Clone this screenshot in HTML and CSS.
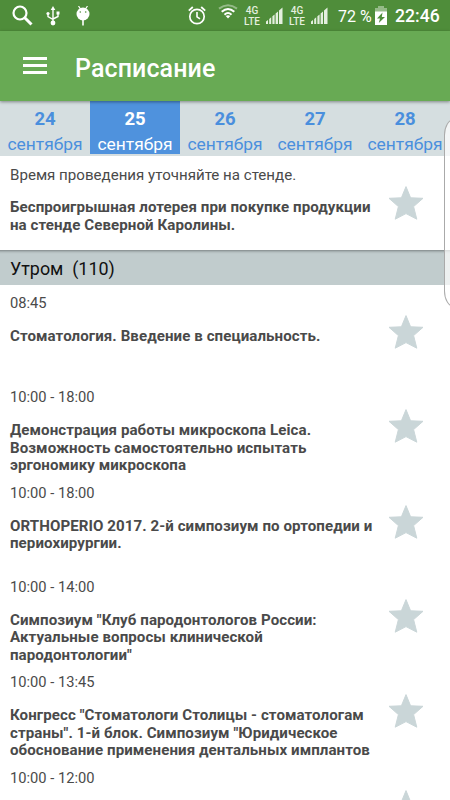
FILE: index.html
```
<!DOCTYPE html>
<html lang="ru">
<head>
    <meta charset="UTF-8">
    <meta name="viewport" content="width=device-width, initial-scale=1.0">
    <title>Расписание</title>
    <link rel="stylesheet" href="styles.css">
</head>
<body>
    <svg class="defs" width="0" height="0">
        <symbol id="star" viewBox="0 0 36 34">
            <path d="M18 .6 22.6 11.8 35 12.3 25.6 20.6 28.8 33.2 18 27.6 7.2 33.2 10.4 20.6 1 12.3 13.4 11.8Z" fill="#cad6d8" stroke="#cad6d8" stroke-linejoin="round"/>
        </symbol>
        <symbol id="signal" viewBox="0 0 18 18">
            <path d="M1 17v-2.500l2-1.500V17zM4.200 17v-5l2-1.800V17zM7.400 17V9.300l2.200-1.800V17zM10.600 17V6.500l2.400-2V17zM14 17V3.500l3.500-3V17z" fill="#e4efdf"/>
        </symbol>
    </svg>

    <div class="status-bar">
        <div class="status-left">
            <svg class="icon-search" width="22" height="22" viewBox="0 0 22 22" fill="none" stroke="#fff">
                <circle cx="8" cy="8" r="6.500" stroke-width="2.200"/>
                <path d="M12.500 12.500 19.500 19.500" stroke-width="3"/>
            </svg>
            <svg class="icon-usb" width="14" height="20" viewBox="0 0 14 20">
                <path d="M7 3v13M7 13.500 2 10.500V8M7 13 12 10.500V7" fill="none" stroke="#fff" stroke-width="1.400"/>
                <path d="M7 0 9.300 4H4.700z" fill="#fff"/>
                <circle cx="7" cy="17" r="2.400" fill="#fff"/>
                <circle cx="2" cy="7.500" r="1.600" fill="#fff"/>
                <path d="M10.500 5.500h3v3h-3z" fill="#fff"/>
            </svg>
            <svg class="icon-droid" width="14" height="20" viewBox="0 0 14 20">
                <path d="M2.500 0 4.500 3M11.500 0 9.500 3" stroke="#fff" stroke-width="1.200"/>
                <circle cx="7" cy="8" r="6.500" fill="#fff"/>
                <path d="M7 14v5.500" stroke="#fff" stroke-width="1.600"/>
                <circle cx="4.300" cy="6" r=".8" fill="#4f8d3a"/>
                <circle cx="9.700" cy="6" r=".8" fill="#4f8d3a"/>
            </svg>
        </div>
        <div class="status-right">
            <svg class="icon-alarm" width="18" height="19" viewBox="0 0 18 19" fill="none" stroke="#fff">
                <circle cx="9" cy="10.500" r="7.200" stroke-width="1.700"/>
                <path d="M9 6v4.800l3 2" stroke-width="1.600"/>
                <path d="M.8 4.700 4.800 1M17.200 4.700 13.200 1" stroke-width="1.800"/>
            </svg>
            <svg class="icon-wifi" width="20" height="15" viewBox="0 0 20 15" fill="none" stroke="#fff">
                <path d="M1 4.600Q10-2.200 19 4.600" stroke-width="2" opacity=".4"/>
                <path d="M3.700 7.800Q10 2.200 16.300 7.800" stroke-width="2"/>
                <path d="M6.500 10.700Q10 7.200 13.500 10.700" stroke-width="2"/>
                <path d="M10 14.500 7.700 12q2.300-1.600 4.600 0z" fill="#fff" stroke="none"/>
            </svg>
            <div class="net"><span>4G</span><span>LTE</span></div>
            <svg class="icon-signal" width="18" height="18"><use href="#signal"/></svg>
            <div class="net"><span>4G</span><span>LTE</span></div>
            <svg class="icon-signal" width="18" height="18"><use href="#signal"/></svg>
            <span class="percent">72 %</span>
            <svg class="icon-battery" width="12" height="19" viewBox="0 0 12 19">
                <path d="M3 0h6v2h3v4H0V2h3z" fill="#fff" opacity=".4"/>
                <path d="M0 5.500h12V19H0z" fill="#fff"/>
                <path d="M7.500 6.500 2 12.500h3L3.800 17 10 11H6.800z" fill="#4f8d3a"/>
            </svg>
            <span class="clock">22:46</span>
        </div>
    </div>

    <header class="toolbar">
        <div class="menu"><i></i><i></i><i></i></div>
        <h1>Расписание</h1>
    </header>

    <nav class="days">
        <div class="day"><b>24</b><span>сентября</span></div>
        <div class="day active"><b>25</b><span>сентября</span></div>
        <div class="day"><b>26</b><span>сентября</span></div>
        <div class="day"><b>27</b><span>сентября</span></div>
        <div class="day"><b>28</b><span>сентября</span></div>
    </nav>

    <main>
        <div class="event">
            <div class="info">
                <p class="time note">Время проведения уточняйте на стенде.</p>
                <p class="title">Беспроигрышная лотерея при покупке продукции<br>на стенде Северной Каролины.</p>
            </div>
            <svg class="star" width="36" height="34"><use href="#star"/></svg>
        </div>

        <h2 class="section">Утром&nbsp; (110)</h2>

        <div class="event">
            <div class="info">
                <p class="time">08:45</p>
                <p class="title">Стоматология. Введение в специальность.</p>
            </div>
            <svg class="star" width="36" height="34"><use href="#star"/></svg>
        </div>
        <div class="event">
            <div class="info">
                <p class="time">10:00 - 18:00</p>
                <p class="title">Демонстрация работы микроскопа Leica.<br>Возможность самостоятельно испытать<br>эргономику микроскопа</p>
            </div>
            <svg class="star" width="36" height="34"><use href="#star"/></svg>
        </div>
        <div class="event">
            <div class="info">
                <p class="time">10:00 - 18:00</p>
                <p class="title">ORTHOPERIO 2017. 2-й симпозиум по ортопедии и<br>периохирургии.</p>
            </div>
            <svg class="star" width="36" height="34"><use href="#star"/></svg>
        </div>
        <div class="event">
            <div class="info">
                <p class="time">10:00 - 14:00</p>
                <p class="title">Симпозиум "Клуб пародонтологов России:<br>Актуальные вопросы клинической<br>пародонтологии"</p>
            </div>
            <svg class="star" width="36" height="34"><use href="#star"/></svg>
        </div>
        <div class="event">
            <div class="info">
                <p class="time">10:00 - 13:45</p>
                <p class="title">Конгресс "Стоматологи Столицы - стоматологам<br>страны". 1-й блок. Симпозиум "Юридическое<br>обоснование применения дентальных имплантов</p>
            </div>
            <svg class="star" width="36" height="34"><use href="#star"/></svg>
        </div>
        <div class="event">
            <div class="info">
                <p class="time">10:00 - 12:00</p>
            </div>
            <svg class="star" width="36" height="34"><use href="#star"/></svg>
        </div>
    </main>

    <div class="edge-panel"></div>
</body>
</html>
```
FILE: styles.css
```
* {
    margin: 0;
    padding: 0;
    box-sizing: border-box;
}

html {
    overflow: hidden;
}

body {
    font-family: Roboto, sans-serif;
    background: #fff;
    color: #4a4a4a;
    width: 450px;
    height: 800px;
    overflow: hidden;
    position: relative;
    display: flex;
    flex-direction: column;
}

main {
    flex: 1;
    min-height: 0;
    overflow: hidden;
}

svg {
    display: block;
    flex-shrink: 0;
}

.defs {
    position: absolute;
}

.status-bar {
    height: 31px;
    flex-shrink: 0;
    background: #4f8d3a;
    color: #fff;
    display: flex;
    justify-content: space-between;
    padding: 0 10px 0 12px;
}

.status-left,
.status-right {
    display: flex;
    align-items: flex-start;
    white-space: nowrap;
}

.icon-search {
    margin-top: 5px;
}

.icon-usb {
    margin: 6px 0 0 12px;
}

.icon-droid {
    margin: 6px 0 0 16px;
}

.icon-alarm {
    margin: 6px 12px 0 0;
}

.icon-wifi {
    margin: 4px 6px 0 0;
}

.net {
    display: flex;
    flex-direction: column;
    align-items: center;
    width: 16px;
    margin: 5px 5px 0 0;
    font-size: 10px;
    font-weight: 500;
    line-height: 11px;
    color: #e4efdf;
}

.icon-signal {
    margin: 7px 6px 0 0;
}

.percent {
    width: 37px;
    font-size: 16px;
    line-height: 33px;
    margin-left: 4px;
}

.icon-battery {
    margin-top: 6px;
}

.clock {
    width: 45px;
    font-size: 17.6px;
    font-weight: 500;
    line-height: 33px;
    margin-left: 8px;
}

.toolbar {
    height: 70px;
    flex-shrink: 0;
    background: #68aa54;
    display: flex;
    align-items: center;
    padding-left: 23px;
    position: relative;
    z-index: 1;
    box-shadow: 0 1px 3px rgba(0, 0, 0, 0.4);
}

.menu {
    width: 24px;
    display: flex;
    flex-direction: column;
    gap: 4px;
    margin: 0 28px 1px 0;
}

.menu i {
    height: 3px;
    background: #fff;
}

h1 {
    font-size: 25px;
    font-weight: 500;
    line-height: 30px;
    letter-spacing: 0.1px;
    color: #fff;
    padding-top: 5px;
}

.days {
    height: 55px;
    flex-shrink: 0;
    background: #d5dee0;
    display: flex;
}

.day {
    width: 90px;
    height: 53px;
    flex-shrink: 0;
    display: flex;
    flex-direction: column;
    align-items: center;
    color: #4a8fdd;
    font-size: 17.4px;
    line-height: 25px;
    padding-top: 6px;
}

.day b {
    font-size: 18.5px;
}

.day.active {
    background: #4f92dd;
    color: #fff;
}

.event {
    display: flex;
    justify-content: space-between;
    min-height: 94px;
    padding: 10px 26px 0 10px;
}

.time {
    font-size: 14.7px;
    line-height: 17.5px;
    margin-bottom: 15.5px;
}

.note {
    font-size: 15.1px;
    line-height: 18.5px;
    margin-bottom: 14.5px;
}

.title {
    font-size: 15.1px;
    letter-spacing: 0.07px;
    font-weight: bold;
    line-height: 17.5px;
    white-space: nowrap;
}

.star {
    margin-top: 20px;
}

.section {
    height: 35px;
    background: #c1cccd;
    box-shadow: inset 0 4px 3px -3px rgba(0, 0, 0, 0.4);
    color: #111;
    font-size: 17.9px;
    font-weight: normal;
    line-height: 37px;
    padding-left: 10px;
}

/* handle of the side panel, cut off by the screen edge */
.edge-panel {
    position: absolute;
    top: 119px;
    right: -18px;
    width: 24px;
    height: 188px;
    border: 1px solid #aaa;
    border-radius: 10px / 16px;
    background: rgba(255, 255, 255, 0.7);
    z-index: 2;
}
```
